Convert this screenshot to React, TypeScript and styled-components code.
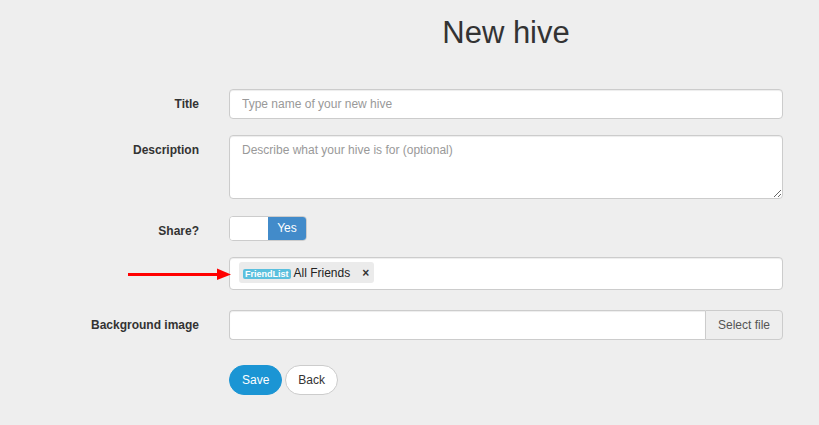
import React from "react";
import styled, { createGlobalStyle } from "styled-components";

const GlobalStyle = createGlobalStyle`
  html, body {
    margin: 0;
    padding: 0;
    background: #eeeeee;
    font-family: "Liberation Sans", Arial, sans-serif;
    color: #333;
  }
  * { box-sizing: border-box; }
`;

const Page = styled.div`
  padding: 16px 21px 30px 19px;
`;

const Row = styled.div<{ $gap?: number }>`
  position: relative;
  display: grid;
  grid-template-columns: 195px 1fr;
  align-items: start;
  margin-bottom: ${(p) => (p.$gap ?? 16)}px;
`;

const Label = styled.label`
  padding: 7px 15px 0 0;
  text-align: right;
  font-size: 12px;
  line-height: 17px;
  font-weight: bold;
  color: #333;
`;

const Control = styled.div`
  padding: 0 15px;
`;

const Heading = styled.h1`
  margin: 0;
  text-align: center;
  font-size: 31px;
  line-height: 34px;
  font-weight: normal;
  color: #333;
`;

const fieldBase = `
  display: block;
  width: 100%;
  border: 1px solid #ccc;
  border-radius: 4px;
  background: #fff;
  box-shadow: inset 0 1px 1px rgba(0, 0, 0, 0.075);
  font-family: "Liberation Sans", Arial, sans-serif;
  font-size: 12px;
  line-height: 17px;
  color: #555;
  outline: none;
  &::placeholder { color: #999; }
`;

const TextInput = styled.input`
  ${fieldBase}
  height: 30px;
  padding: 6px 12px;
`;

const TextArea = styled.textarea`
  ${fieldBase}
  height: 64px;
  padding: 6px 12px;
  resize: vertical;
  margin: 0;
`;

const Switch = styled.div`
  display: flex;
  width: 78px;
  height: 25px;
  border: 1px solid #ccc;
  border-radius: 4px;
  overflow: hidden;
  background: #fff;
`;

const SwitchHalf = styled.span<{ $on?: boolean }>`
  width: 38px;
  height: 100%;
  background: ${(p) => (p.$on ? "#428bca" : "#fff")};
  color: #fff;
  font-size: 12px;
  line-height: 23px;
  text-align: center;
`;

const TagsBox = styled.div`
  display: flex;
  align-items: flex-start;
  height: 33px;
  padding: 4px 9px;
  border: 1px solid #ccc;
  border-radius: 4px;
  background: #fff;
  box-shadow: inset 0 1px 1px rgba(0, 0, 0, 0.075);
`;

const Tag = styled.span`
  display: inline-flex;
  align-items: center;
  height: 21px;
  padding: 0 5px 0 4px;
  background: #ebebeb;
  border-radius: 3px;
  font-size: 12px;
  color: #222;
`;

const TagType = styled.span`
  background: #5bc0de;
  color: #fff;
  font-size: 9px;
  font-weight: bold;
  line-height: 10px;
  padding: 0 2px;
  border-radius: 2px;
  margin-top: 3px;
`;

const TagText = styled.span`
  margin-left: 3px;
`;

const TagRemove = styled.span`
  margin-left: 12px;
  font-weight: bold;
  font-size: 12px;
  color: #333;
`;

const Arrow = styled.svg`
  position: absolute;
  left: 109px;
  top: 11px;
`;

const FileGroup = styled.div`
  display: flex;
  height: 30px;
`;

const FileField = styled.div`
  flex: 1;
  border: 1px solid #ccc;
  border-right: none;
  border-radius: 4px 0 0 4px;
  background: #fff;
  box-shadow: inset 0 1px 1px rgba(0, 0, 0, 0.075);
`;

const FileButton = styled.span`
  width: 78px;
  border: 1px solid #ccc;
  border-radius: 0 4px 4px 0;
  background: #eeeeee;
  color: #555;
  font-size: 12px;
  line-height: 28px;
  text-align: center;
`;

const Buttons = styled.div`
  display: flex;
  gap: 3px;
`;

const Button = styled.button<{ $primary?: boolean }>`
  height: 30px;
  padding: 0 12px;
  border-radius: 15px;
  border: 1px solid ${(p) => (p.$primary ? "#1b95d4" : "#ccc")};
  background: ${(p) => (p.$primary ? "#1b95d4" : "#fff")};
  color: ${(p) => (p.$primary ? "#fff" : "#333")};
  font-family: "Liberation Sans", Arial, sans-serif;
  font-size: 12px;
  cursor: pointer;
`;

export default function App() {
  return (
    <>
      <GlobalStyle />
      <Page>
        <Row $gap={39}>
          <span />
          <Control>
            <Heading>New hive</Heading>
          </Control>
        </Row>
        <Row>
          <Label>Title</Label>
          <Control>
            <TextInput placeholder="Type name of your new hive" />
          </Control>
        </Row>
        <Row $gap={17}>
          <Label>Description</Label>
          <Control>
            <TextArea placeholder="Describe what your hive is for (optional)" />
          </Control>
        </Row>
        <Row>
          <Label>Share?</Label>
          <Control>
            <Switch>
              <SwitchHalf />
              <SwitchHalf $on>Yes</SwitchHalf>
            </Switch>
          </Control>
        </Row>
        <Row $gap={20}>
          <span />
          <Control>
            <TagsBox>
              <Tag>
                <TagType>FriendList</TagType>
                <TagText>All Friends</TagText>
                <TagRemove>×</TagRemove>
              </Tag>
            </TagsBox>
          </Control>
          <Arrow width="104" height="12" viewBox="0 0 104 12">
            <rect x="0" y="5" width="92" height="3" fill="#ff0000" />
            <polygon points="89,0.5 103,6.5 89,12" fill="#ff0000" />
          </Arrow>
        </Row>
        <Row $gap={25}>
          <Label>Background image</Label>
          <Control>
            <FileGroup>
              <FileField />
              <FileButton>Select file</FileButton>
            </FileGroup>
          </Control>
        </Row>
        <Row>
          <span />
          <Control>
            <Buttons>
              <Button $primary>Save</Button>
              <Button>Back</Button>
            </Buttons>
          </Control>
        </Row>
      </Page>
    </>
  );
}
